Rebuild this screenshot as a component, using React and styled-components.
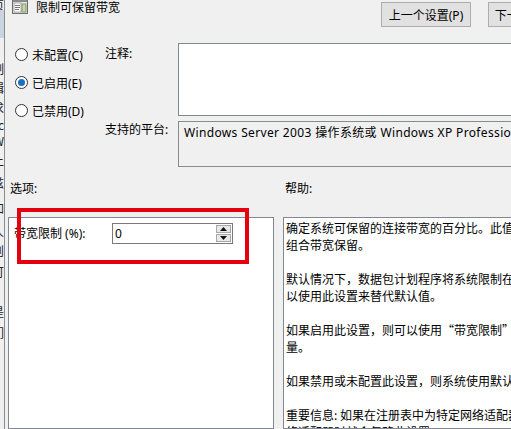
import React from 'react';
import styled, { createGlobalStyle } from 'styled-components';

const GlobalStyle = createGlobalStyle`
  html, body {
    margin: 0;
    padding: 0;
    background: #f0f0f0;
    overflow: hidden;
  }
  body {
    font-family: "Noto Sans", "Noto Sans CJK SC", sans-serif;
    font-size: 12px;
    color: #000;
  }
`;

const Page = styled.div`
  position: relative;
  display: flex;
  width: 588px;
  height: 429px;
  background: #f0f0f0;
  overflow: hidden;
`;

// window behind the dialog, only its right edge shows
const BackStrip = styled.div`
  flex: none;
  width: 4px;
  border-right: 1px solid #8c8c8c;
  overflow: hidden;
  display: flex;
  flex-direction: column;
  font-family: "Noto Sans CJK SC", sans-serif;
`;

const StripCell = styled.div`
  flex: none;
  display: flex;
  justify-content: flex-end;
  height: ${({ $h }) => $h}px;
  line-height: ${({ $h }) => $h}px;
  white-space: nowrap;
  background: ${({ $sel }) => ($sel ? '#c9d4e1' : 'transparent')};
  color: #222;
`;

const Dialog = styled.div`
  flex: 1;
  display: flex;
  flex-direction: column;
  min-width: 0;
`;

const Header = styled.div`
  flex: none;
  height: 43px;
  display: flex;
  align-items: flex-start;
  padding: 0 10px 0 7px;
`;

const TitleIcon = styled.svg`
  flex: none;
  margin-top: -2px;
`;

const Title = styled.div`
  flex: 1;
  margin-left: 8px;
  line-height: 15px;
`;

const NavButtons = styled.div`
  display: flex;
  gap: 17px;
`;

const NavButton = styled.button`
  width: 90px;
  height: 25px;
  margin-top: 2px;
  padding: 0;
  border: 1px solid #adadad;
  background: #e1e1e1;
  font: inherit;
  color: #000;
`;

const TopGrid = styled.div`
  flex: none;
  display: grid;
  grid-template-columns: 100px 73px 1fr;
  grid-template-rows: 73px 46px;
  row-gap: 5px;
  padding-right: 10px;
`;

const RadioGroup = styled.div`
  grid-row: 1 / span 2;
  padding: 4px 0 0 10px;
`;

const RadioRow = styled.div`
  display: flex;
  align-items: center;
  height: 15px;
  margin-bottom: 13px;
`;

const RadioCircle = styled.span`
  box-sizing: border-box;
  width: 13px;
  height: 13px;
  border-radius: 50%;
  border: 1px solid #333;
  background: #fff;
  margin-right: 4px;
  display: flex;
  align-items: center;
  justify-content: center;

  &::after {
    content: '';
    width: 7px;
    height: 7px;
    border-radius: 50%;
    background: ${({ $checked }) => ($checked ? '#1a6fc4' : 'transparent')};
  }
`;

const FieldLabel = styled.div`
  padding-top: ${({ $top }) => $top}px;
  line-height: 15px;
`;

const CommentBox = styled.div`
  background: #fff;
  border: 1px solid #828790;
`;

const PlatformBox = styled.div`
  border: 1px solid #8a8a8a;
  background: #f0f0f0;
  padding: 3px 5px;
  line-height: 15px;
  letter-spacing: 0.35px;
  white-space: nowrap;
  overflow: hidden;
`;

const SectionGrid = styled.div`
  display: grid;
  grid-template-columns: 275px 1fr;
  padding-left: 3px;
`;

const SectionLabels = styled(SectionGrid)`
  flex: none;
  height: 50px;
  box-sizing: border-box;
  padding-top: 14px;
  line-height: 15px;
`;

const SectionLabel = styled.div`
  padding-left: 2px;
`;

const Panels = styled(SectionGrid)`
  flex: 1;
  min-height: 0;
  overflow: hidden;
  padding-right: 10px;
`;

const OptionsPanel = styled.div`
  width: 266px;
  box-sizing: border-box;
  background: #fff;
  border: 1px solid #828790;
  padding: 5px 0 0 5px;
`;

const OptionRow = styled.div`
  display: flex;
  align-items: center;
`;

const OptionLabel = styled.div`
  width: 98px;
  line-height: 15px;
`;

const SpinBox = styled.div`
  box-sizing: border-box;
  width: 121px;
  height: 21px;
  border: 1px solid #7a7a7a;
  background: #fff;
  display: flex;
  align-items: center;
  justify-content: space-between;
  padding: 0 1px 0 2px;
`;

const SpinButtons = styled.div`
  display: flex;
  flex-direction: column;
  gap: 1px;
`;

const SpinButton = styled.div`
  box-sizing: border-box;
  width: 15px;
  height: 8px;
  border: 1px solid #a8a8a8;
  background: #e8e8e8;
  display: flex;
  align-items: center;
  justify-content: center;
`;

const HelpPanel = styled.div`
  background: #fff;
  border: 1px solid #828790;
  padding: 1px 2px;
  font-family: "Noto Sans CJK SC", sans-serif;
  line-height: 17px;
  overflow: hidden;
`;

const HelpLine = styled.div`
  height: 17px;
  white-space: nowrap;
`;

const Annotation = styled.div`
  position: absolute;
  left: 17px;
  top: 208px;
  width: 232px;
  height: 56px;
  box-sizing: border-box;
  border: 4px solid #e3000f;
  pointer-events: none;
`;

const stripRows = [
  { t: '页', h: 10 },
  { t: '', h: 28, sel: true },
  { t: '', h: 22 },
  { t: '制', h: 18 },
  { t: '辑', h: 20 },
  { t: '求', h: 20 },
  { t: 'c', h: 14 },
  { t: 'W', h: 18 },
  { t: '上', h: 22 },
  { t: '兹', h: 22 },
  { t: '加', h: 28 },
  { t: '人', h: 20 },
  { t: '则', h: 18 },
  { t: '可', h: 24 },
  { t: '', h: 18 },
  { t: '是', h: 20 },
  { t: '们', h: 22 },
];

const helpLines = [
  '确定系统可保留的连接带宽的百分比。此值可用于限制整个系统的',
  '组合带宽保留。',
  '',
  '默认情况下，数据包计划程序将系统限制在连接带宽的 80%，但可',
  '以使用此设置来替代默认值。',
  '',
  '如果启用此设置，则可以使用“带宽限制”框调整系统可保留的带宽',
  '量。',
  '',
  '如果禁用或未配置此设置，则系统使用默认值 80%。',
  '',
  '重要信息: 如果在注册表中为特定网络适配器设置了带宽限制，则配置该网',
  '络适配器时就会忽略此设置。',
];

const PolicyIcon = () => (
  <TitleIcon width="16" height="16" viewBox="0 0 16 16">
    <rect x="0.5" y="0.5" width="15" height="15" fill="#e4e4e4" stroke="#6e6e6e" />
    <rect x="1" y="1" width="14" height="3" fill="#8b8b8b" />
    <rect x="2" y="5" width="7" height="9" fill="#fff" stroke="#9a9a9a" strokeWidth="0.8" />
    <rect x="3" y="7" width="5" height="1" fill="#777" />
    <rect x="3" y="9" width="5" height="1" fill="#777" />
    <rect x="3" y="11" width="4" height="1" fill="#777" />
    <rect x="10" y="6" width="4" height="8" fill="#c8d3a8" stroke="#7c8a5a" strokeWidth="0.8" />
  </TitleIcon>
);

const Arrow = ({ up }) => (
  <svg width="7" height="4" viewBox="0 0 7 4">
    <path d={up ? 'M0 4 L3.5 0 L7 4 Z' : 'M0 0 L7 0 L3.5 4 Z'} fill="#111" />
  </svg>
);

const App = () => {
  return (
    <>
      <GlobalStyle />
      <Page>
        <BackStrip>
          {stripRows.map((row, i) => (
            <StripCell key={i} $h={row.h} $sel={row.sel}>
              {row.t}
            </StripCell>
          ))}
        </BackStrip>
        <Dialog>
          <Header>
            <PolicyIcon />
            <Title>限制可保留带宽</Title>
            <NavButtons>
              <NavButton>上一个设置(P)</NavButton>
              <NavButton>下一个设置(N)</NavButton>
            </NavButtons>
          </Header>

          <TopGrid>
            <RadioGroup>
              <RadioRow>
                <RadioCircle />
                未配置(C)
              </RadioRow>
              <RadioRow>
                <RadioCircle $checked />
                已启用(E)
              </RadioRow>
              <RadioRow>
                <RadioCircle />
                已禁用(D)
              </RadioRow>
            </RadioGroup>
            <FieldLabel $top={3}>注释:</FieldLabel>
            <CommentBox />
            <FieldLabel $top={1}>支持的平台:</FieldLabel>
            <PlatformBox>
              Windows Server 2003 操作系统或 Windows XP Professional
            </PlatformBox>
          </TopGrid>

          <SectionLabels>
            <SectionLabel>选项:</SectionLabel>
            <SectionLabel>帮助:</SectionLabel>
          </SectionLabels>

          <Panels>
            <OptionsPanel>
              <OptionRow>
                <OptionLabel>带宽限制 (%):</OptionLabel>
                <SpinBox>
                  <span>0</span>
                  <SpinButtons>
                    <SpinButton>
                      <Arrow up />
                    </SpinButton>
                    <SpinButton>
                      <Arrow />
                    </SpinButton>
                  </SpinButtons>
                </SpinBox>
              </OptionRow>
            </OptionsPanel>
            <HelpPanel>
              {helpLines.map((line, i) => (
                <HelpLine key={i}>{line}</HelpLine>
              ))}
            </HelpPanel>
          </Panels>
        </Dialog>
        <Annotation />
      </Page>
    </>
  );
};

export default App;
